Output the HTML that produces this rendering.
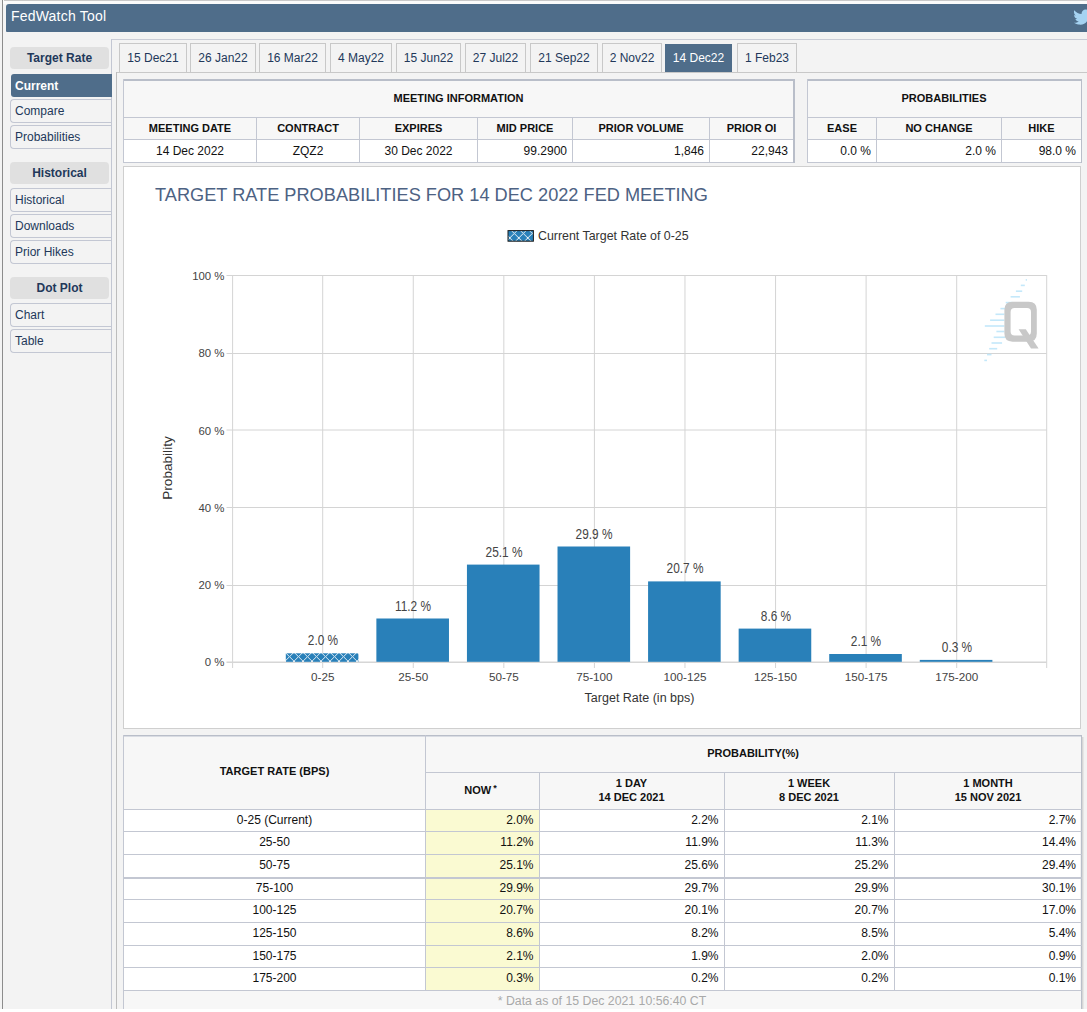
<!DOCTYPE html><html><head><meta charset="utf-8"><style>*{box-sizing:border-box;}html,body{margin:0;padding:0;width:1087px;height:1012px;overflow:hidden;background:#fff;}body{font-family:"Liberation Sans", sans-serif;position:relative;}</style></head><body>
<div style="position:absolute;left:0px;top:0px;width:1087px;height:1009px;background:#f3f3f3;"></div>
<div style="position:absolute;left:3px;top:0px;width:1084px;height:4px;background:#fbfbfb;"></div>
<div style="position:absolute;left:4px;top:0px;width:1083px;height:1px;background:#c9c9c9;"></div>
<div style="position:absolute;left:2px;top:0px;width:1px;height:1009px;background:#8c8c8c;"></div>
<div style="position:absolute;left:6px;top:4px;width:1090px;height:28px;background:#4f6d8a;border-top-left-radius:3px;border-bottom-left-radius:1px;"></div>
<div style="position:absolute;left:11px;top:9.15px;font-size:14px;line-height:14px;color:#fff;font-weight:normal;white-space:nowrap;letter-spacing:0.2px;">FedWatch Tool</div>
<svg style="position:absolute;left:1071.5px;top:7px" width="15.5" height="18" viewBox="0 0 15.5 18"><path fill="#a6d3f2" d="M2.2 3.2 C4.2 5.6 6.8 7.0 9.6 7.1 C9.3 4.6 11.2 2.6 13.6 2.6 C14.8 2.6 15.8 3.1 16.5 3.9 L16.5 9 C16.5 14.5 12.4 18.5 6.5 17.5 C4.6 17.3 3.2 16.6 2.0 15.8 C3.6 16.0 5.6 15.4 6.8 14.4 C5.2 14.3 3.9 13.3 3.4 11.9 C4.0 12.0 4.5 12.0 5.1 11.8 C3.4 11.4 2.1 9.9 2.1 8.1 C2.6 8.4 3.2 8.6 3.8 8.6 C2.1 7.5 1.6 5.1 2.2 3.2 Z"/></svg>
<div style="position:absolute;left:111px;top:39px;width:976px;height:1px;background:#c9ccd6;"></div>
<div style="position:absolute;left:111px;top:39px;width:1px;height:970px;background:#c3c7d3;"></div>
<div style="position:absolute;left:119px;top:43px;width:68px;height:29px;background:#f3f3f3;border:1px solid #c8c8c8;border-bottom:none;"></div>
<div style="position:absolute;left:-847.0px;width:2000px;text-align:center;top:51.84px;font-size:12px;line-height:12px;color:#22385a;font-weight:normal;white-space:nowrap;">15 Dec21</div>
<div style="position:absolute;left:190px;top:43px;width:66px;height:29px;background:#f3f3f3;border:1px solid #c8c8c8;border-bottom:none;"></div>
<div style="position:absolute;left:-777.0px;width:2000px;text-align:center;top:51.84px;font-size:12px;line-height:12px;color:#22385a;font-weight:normal;white-space:nowrap;">26 Jan22</div>
<div style="position:absolute;left:259px;top:43px;width:67px;height:29px;background:#f3f3f3;border:1px solid #c8c8c8;border-bottom:none;"></div>
<div style="position:absolute;left:-707.5px;width:2000px;text-align:center;top:51.84px;font-size:12px;line-height:12px;color:#22385a;font-weight:normal;white-space:nowrap;">16 Mar22</div>
<div style="position:absolute;left:330px;top:43px;width:62px;height:29px;background:#f3f3f3;border:1px solid #c8c8c8;border-bottom:none;"></div>
<div style="position:absolute;left:-639.0px;width:2000px;text-align:center;top:51.84px;font-size:12px;line-height:12px;color:#22385a;font-weight:normal;white-space:nowrap;">4 May22</div>
<div style="position:absolute;left:396px;top:43px;width:65px;height:29px;background:#f3f3f3;border:1px solid #c8c8c8;border-bottom:none;"></div>
<div style="position:absolute;left:-571.5px;width:2000px;text-align:center;top:51.84px;font-size:12px;line-height:12px;color:#22385a;font-weight:normal;white-space:nowrap;">15 Jun22</div>
<div style="position:absolute;left:465px;top:43px;width:61px;height:29px;background:#f3f3f3;border:1px solid #c8c8c8;border-bottom:none;"></div>
<div style="position:absolute;left:-504.5px;width:2000px;text-align:center;top:51.84px;font-size:12px;line-height:12px;color:#22385a;font-weight:normal;white-space:nowrap;">27 Jul22</div>
<div style="position:absolute;left:530px;top:43px;width:68px;height:29px;background:#f3f3f3;border:1px solid #c8c8c8;border-bottom:none;"></div>
<div style="position:absolute;left:-436.0px;width:2000px;text-align:center;top:51.84px;font-size:12px;line-height:12px;color:#22385a;font-weight:normal;white-space:nowrap;">21 Sep22</div>
<div style="position:absolute;left:602px;top:43px;width:60px;height:29px;background:#f3f3f3;border:1px solid #c8c8c8;border-bottom:none;"></div>
<div style="position:absolute;left:-368.0px;width:2000px;text-align:center;top:51.84px;font-size:12px;line-height:12px;color:#22385a;font-weight:normal;white-space:nowrap;">2 Nov22</div>
<div style="position:absolute;left:665px;top:44px;width:67px;height:28px;background:#4f6d8a;"></div>
<div style="position:absolute;left:-301.5px;width:2000px;text-align:center;top:51.84px;font-size:12px;line-height:12px;color:#fff;font-weight:normal;white-space:nowrap;">14 Dec22</div>
<div style="position:absolute;left:737px;top:43px;width:60px;height:29px;background:#f3f3f3;border:1px solid #c8c8c8;border-bottom:none;"></div>
<div style="position:absolute;left:-233.0px;width:2000px;text-align:center;top:51.84px;font-size:12px;line-height:12px;color:#22385a;font-weight:normal;white-space:nowrap;">1 Feb23</div>
<div style="position:absolute;left:116px;top:72px;width:971px;height:1px;background:#c8c8c8;"></div>
<div style="position:absolute;left:116px;top:72px;width:1px;height:937px;background:#bdbdbd;"></div>
<div style="position:absolute;left:10px;top:47px;width:99px;height:22px;background:#e0e0e0;border-radius:4px;"></div>
<div style="position:absolute;left:-940.5px;width:2000px;text-align:center;top:51.84px;font-size:12px;line-height:12px;color:#22385a;font-weight:bold;white-space:nowrap;">Target Rate</div>
<div style="position:absolute;left:11px;top:74px;width:101px;height:23px;background:#4f6d8a;border-radius:3px 0 0 3px;"></div>
<div style="position:absolute;left:15px;top:79.64px;font-size:12px;line-height:12px;color:#fff;font-weight:bold;white-space:nowrap;">Current</div>
<div style="position:absolute;left:10px;top:99px;width:101px;height:24px;background:#f3f3f3;border:1px solid #c3c7d3;border-right:none;border-radius:4px 0 0 4px;"></div>
<div style="position:absolute;left:15px;top:104.64px;font-size:12px;line-height:12px;color:#22385a;font-weight:normal;white-space:nowrap;">Compare</div>
<div style="position:absolute;left:10px;top:125px;width:101px;height:24px;background:#f3f3f3;border:1px solid #c3c7d3;border-right:none;border-radius:4px 0 0 4px;"></div>
<div style="position:absolute;left:15px;top:130.64px;font-size:12px;line-height:12px;color:#22385a;font-weight:normal;white-space:nowrap;">Probabilities</div>
<div style="position:absolute;left:10px;top:162px;width:99px;height:22px;background:#e0e0e0;border-radius:4px;"></div>
<div style="position:absolute;left:-940.5px;width:2000px;text-align:center;top:166.84px;font-size:12px;line-height:12px;color:#22385a;font-weight:bold;white-space:nowrap;">Historical</div>
<div style="position:absolute;left:10px;top:188px;width:101px;height:24px;background:#f3f3f3;border:1px solid #c3c7d3;border-right:none;border-radius:4px 0 0 4px;"></div>
<div style="position:absolute;left:15px;top:193.64px;font-size:12px;line-height:12px;color:#22385a;font-weight:normal;white-space:nowrap;">Historical</div>
<div style="position:absolute;left:10px;top:214px;width:101px;height:24px;background:#f3f3f3;border:1px solid #c3c7d3;border-right:none;border-radius:4px 0 0 4px;"></div>
<div style="position:absolute;left:15px;top:219.64px;font-size:12px;line-height:12px;color:#22385a;font-weight:normal;white-space:nowrap;">Downloads</div>
<div style="position:absolute;left:10px;top:240px;width:101px;height:24px;background:#f3f3f3;border:1px solid #c3c7d3;border-right:none;border-radius:4px 0 0 4px;"></div>
<div style="position:absolute;left:15px;top:245.64px;font-size:12px;line-height:12px;color:#22385a;font-weight:normal;white-space:nowrap;">Prior Hikes</div>
<div style="position:absolute;left:10px;top:277px;width:99px;height:22px;background:#e0e0e0;border-radius:4px;"></div>
<div style="position:absolute;left:-940.5px;width:2000px;text-align:center;top:281.84px;font-size:12px;line-height:12px;color:#22385a;font-weight:bold;white-space:nowrap;">Dot Plot</div>
<div style="position:absolute;left:10px;top:303px;width:101px;height:24px;background:#f3f3f3;border:1px solid #c3c7d3;border-right:none;border-radius:4px 0 0 4px;"></div>
<div style="position:absolute;left:15px;top:308.64px;font-size:12px;line-height:12px;color:#22385a;font-weight:normal;white-space:nowrap;">Chart</div>
<div style="position:absolute;left:10px;top:329px;width:101px;height:24px;background:#f3f3f3;border:1px solid #c3c7d3;border-right:none;border-radius:4px 0 0 4px;"></div>
<div style="position:absolute;left:15px;top:334.64px;font-size:12px;line-height:12px;color:#22385a;font-weight:normal;white-space:nowrap;">Table</div>
<div style="position:absolute;left:123px;top:79px;width:672px;height:38px;background:#f7f7f7;"></div>
<div style="position:absolute;left:123px;top:118px;width:672px;height:22px;background:#f7f7f7;"></div>
<div style="position:absolute;left:123px;top:140px;width:672px;height:22px;background:#fff;"></div>
<div style="position:absolute;left:123px;top:79px;width:672px;height:2px;background:#b9bec9;"></div>
<div style="position:absolute;left:123px;top:117px;width:672px;height:1px;background:#c3c7d2;"></div>
<div style="position:absolute;left:123px;top:139px;width:672px;height:1px;background:#c3c7d2;"></div>
<div style="position:absolute;left:123px;top:162px;width:672px;height:1px;background:#c3c7d2;"></div>
<div style="position:absolute;left:123px;top:79px;width:1px;height:84px;background:#c3c7d2;"></div>
<div style="position:absolute;left:793px;top:79px;width:2px;height:84px;background:#b9bec9;"></div>
<div style="position:absolute;left:256px;top:117px;width:1px;height:46px;background:#c3c7d2;"></div>
<div style="position:absolute;left:359px;top:117px;width:1px;height:46px;background:#c3c7d2;"></div>
<div style="position:absolute;left:477px;top:117px;width:1px;height:46px;background:#c3c7d2;"></div>
<div style="position:absolute;left:572px;top:117px;width:1px;height:46px;background:#c3c7d2;"></div>
<div style="position:absolute;left:709px;top:117px;width:1px;height:46px;background:#c3c7d2;"></div>
<div style="position:absolute;left:-541.5px;width:2000px;text-align:center;top:93.29px;font-size:11px;line-height:11px;color:#111;font-weight:bold;white-space:nowrap;">MEETING INFORMATION</div>
<div style="position:absolute;left:-810.0px;width:2000px;text-align:center;top:123.29px;font-size:11px;line-height:11px;color:#111;font-weight:bold;white-space:nowrap;">MEETING DATE</div>
<div style="position:absolute;left:-810.0px;width:2000px;text-align:center;top:144.64px;font-size:12px;line-height:12px;color:#111;font-weight:normal;white-space:nowrap;">14 Dec 2022</div>
<div style="position:absolute;left:-692.0px;width:2000px;text-align:center;top:123.29px;font-size:11px;line-height:11px;color:#111;font-weight:bold;white-space:nowrap;">CONTRACT</div>
<div style="position:absolute;left:-692.0px;width:2000px;text-align:center;top:144.64px;font-size:12px;line-height:12px;color:#111;font-weight:normal;white-space:nowrap;">ZQZ2</div>
<div style="position:absolute;left:-581.5px;width:2000px;text-align:center;top:123.29px;font-size:11px;line-height:11px;color:#111;font-weight:bold;white-space:nowrap;">EXPIRES</div>
<div style="position:absolute;left:-581.5px;width:2000px;text-align:center;top:144.64px;font-size:12px;line-height:12px;color:#111;font-weight:normal;white-space:nowrap;">30 Dec 2022</div>
<div style="position:absolute;left:-475.0px;width:2000px;text-align:center;top:123.29px;font-size:11px;line-height:11px;color:#111;font-weight:bold;white-space:nowrap;">MID PRICE</div>
<div style="position:absolute;left:-1433px;width:2000px;text-align:right;top:144.64px;font-size:12px;line-height:12px;color:#111;font-weight:normal;white-space:nowrap;">99.2900</div>
<div style="position:absolute;left:-359.0px;width:2000px;text-align:center;top:123.29px;font-size:11px;line-height:11px;color:#111;font-weight:bold;white-space:nowrap;">PRIOR VOLUME</div>
<div style="position:absolute;left:-1296px;width:2000px;text-align:right;top:144.64px;font-size:12px;line-height:12px;color:#111;font-weight:normal;white-space:nowrap;">1,846</div>
<div style="position:absolute;left:-248.5px;width:2000px;text-align:center;top:123.29px;font-size:11px;line-height:11px;color:#111;font-weight:bold;white-space:nowrap;">PRIOR OI</div>
<div style="position:absolute;left:-1212px;width:2000px;text-align:right;top:144.64px;font-size:12px;line-height:12px;color:#111;font-weight:normal;white-space:nowrap;">22,943</div>
<div style="position:absolute;left:807px;top:79px;width:275px;height:38px;background:#f7f7f7;"></div>
<div style="position:absolute;left:807px;top:118px;width:275px;height:22px;background:#f7f7f7;"></div>
<div style="position:absolute;left:807px;top:140px;width:275px;height:22px;background:#fff;"></div>
<div style="position:absolute;left:807px;top:79px;width:275px;height:2px;background:#b9bec9;"></div>
<div style="position:absolute;left:807px;top:117px;width:275px;height:1px;background:#c3c7d2;"></div>
<div style="position:absolute;left:807px;top:139px;width:275px;height:1px;background:#c3c7d2;"></div>
<div style="position:absolute;left:807px;top:162px;width:275px;height:1px;background:#c3c7d2;"></div>
<div style="position:absolute;left:807px;top:79px;width:1px;height:84px;background:#c3c7d2;"></div>
<div style="position:absolute;left:1081px;top:79px;width:1px;height:84px;background:#b9bec9;"></div>
<div style="position:absolute;left:876px;top:117px;width:1px;height:46px;background:#c3c7d2;"></div>
<div style="position:absolute;left:1001px;top:117px;width:1px;height:46px;background:#c3c7d2;"></div>
<div style="position:absolute;left:-56.0px;width:2000px;text-align:center;top:93.29px;font-size:11px;line-height:11px;color:#111;font-weight:bold;white-space:nowrap;">PROBABILITIES</div>
<div style="position:absolute;left:-158.0px;width:2000px;text-align:center;top:123.29px;font-size:11px;line-height:11px;color:#111;font-weight:bold;white-space:nowrap;">EASE</div>
<div style="position:absolute;left:-1129px;width:2000px;text-align:right;top:144.64px;font-size:12px;line-height:12px;color:#111;font-weight:normal;white-space:nowrap;">0.0 %</div>
<div style="position:absolute;left:-61.0px;width:2000px;text-align:center;top:123.29px;font-size:11px;line-height:11px;color:#111;font-weight:bold;white-space:nowrap;">NO CHANGE</div>
<div style="position:absolute;left:-1004px;width:2000px;text-align:right;top:144.64px;font-size:12px;line-height:12px;color:#111;font-weight:normal;white-space:nowrap;">2.0 %</div>
<div style="position:absolute;left:41.5px;width:2000px;text-align:center;top:123.29px;font-size:11px;line-height:11px;color:#111;font-weight:bold;white-space:nowrap;">HIKE</div>
<div style="position:absolute;left:-924px;width:2000px;text-align:right;top:144.64px;font-size:12px;line-height:12px;color:#111;font-weight:normal;white-space:nowrap;">98.0 %</div>
<div style="position:absolute;left:123px;top:166px;width:958px;height:563px;background:#fff;border:1px solid #cfcfcf;"></div>
<svg style="position:absolute;left:124px;top:167px" width="956" height="561" viewBox="124 167 956 561"><defs><pattern id="hatch" patternUnits="userSpaceOnUse" width="9" height="9" x="285" y="652.2"><rect width="9" height="9" fill="#2980b9"/><path d="M0 0 L9 9 M9 0 L0 9" stroke="#fff" stroke-width="1.0" opacity="0.85"/></pattern><pattern id="hatch2" patternUnits="userSpaceOnUse" width="9" height="9" x="509.8" y="228.9"><rect width="9" height="9" fill="#2980b9"/><path d="M0 0 L9 9 M9 0 L0 9" stroke="#fff" stroke-width="1.0" opacity="0.9"/></pattern></defs><line x1="232.6" y1="275.5" x2="1046.7" y2="275.5" stroke="#d4d4d4" stroke-width="1"/><line x1="226.5" y1="275.5" x2="232.6" y2="275.5" stroke="#d4d4d4" stroke-width="1"/><line x1="232.6" y1="353.5" x2="1046.7" y2="353.5" stroke="#d4d4d4" stroke-width="1"/><line x1="226.5" y1="353.5" x2="232.6" y2="353.5" stroke="#d4d4d4" stroke-width="1"/><line x1="232.6" y1="430.0" x2="1046.7" y2="430.0" stroke="#d4d4d4" stroke-width="1"/><line x1="226.5" y1="430.0" x2="232.6" y2="430.0" stroke="#d4d4d4" stroke-width="1"/><line x1="232.6" y1="507.5" x2="1046.7" y2="507.5" stroke="#d4d4d4" stroke-width="1"/><line x1="226.5" y1="507.5" x2="232.6" y2="507.5" stroke="#d4d4d4" stroke-width="1"/><line x1="232.6" y1="585.5" x2="1046.7" y2="585.5" stroke="#d4d4d4" stroke-width="1"/><line x1="226.5" y1="585.5" x2="232.6" y2="585.5" stroke="#d4d4d4" stroke-width="1"/><line x1="322.70" y1="275" x2="322.70" y2="668" stroke="#d4d4d4" stroke-width="1"/><line x1="413.27" y1="275" x2="413.27" y2="668" stroke="#d4d4d4" stroke-width="1"/><line x1="503.84" y1="275" x2="503.84" y2="668" stroke="#d4d4d4" stroke-width="1"/><line x1="594.41" y1="275" x2="594.41" y2="668" stroke="#d4d4d4" stroke-width="1"/><line x1="684.98" y1="275" x2="684.98" y2="668" stroke="#d4d4d4" stroke-width="1"/><line x1="775.55" y1="275" x2="775.55" y2="668" stroke="#d4d4d4" stroke-width="1"/><line x1="866.12" y1="275" x2="866.12" y2="668" stroke="#d4d4d4" stroke-width="1"/><line x1="956.69" y1="275" x2="956.69" y2="668" stroke="#d4d4d4" stroke-width="1"/><line x1="232.6" y1="275" x2="232.6" y2="668" stroke="#d4d4d4" stroke-width="1"/><line x1="1046.7" y1="275" x2="1046.7" y2="668" stroke="#d4d4d4" stroke-width="1"/><line x1="226.5" y1="662.2" x2="1046.7" y2="662.2" stroke="#d6d6d6" stroke-width="1.6"/><rect x="285.80" y="653.30" width="72.6" height="8.50" fill="url(#hatch)"/><rect x="376.37" y="618.50" width="72.6" height="43.30" fill="#2980b9"/><rect x="466.94" y="564.60" width="72.6" height="97.20" fill="#2980b9"/><rect x="557.51" y="546.50" width="72.6" height="115.30" fill="#2980b9"/><rect x="648.08" y="581.40" width="72.6" height="80.40" fill="#2980b9"/><rect x="738.65" y="628.60" width="72.6" height="33.20" fill="#2980b9"/><rect x="829.22" y="654.00" width="72.6" height="7.80" fill="#2980b9"/><rect x="919.79" y="659.90" width="72.6" height="1.90" fill="#2980b9"/></svg>
<div style="position:absolute;left:155px;top:185.59px;font-size:18.2px;line-height:18.2px;color:#4d6283;font-weight:normal;white-space:nowrap;">TARGET RATE PROBABILITIES FOR 14 DEC 2022 FED MEETING</div>
<svg style="position:absolute;left:507px;top:230px" width="27" height="12" viewBox="507 230 27 12"><rect x="508" y="230.6" width="25.4" height="10.6" fill="url(#hatch2)" stroke="#1a1a1a" stroke-width="1"/></svg>
<div style="position:absolute;left:538px;top:229.50px;font-size:12.4px;line-height:12.4px;color:#333;font-weight:normal;white-space:nowrap;">Current Target Rate of 0-25</div>
<div style="position:absolute;left:-1775.5px;width:2000px;text-align:right;top:271.15px;font-size:11.4px;line-height:11.4px;color:#444;font-weight:normal;white-space:nowrap;">100 %</div>
<div style="position:absolute;left:-1775.5px;width:2000px;text-align:right;top:348.41px;font-size:11.4px;line-height:11.4px;color:#444;font-weight:normal;white-space:nowrap;">80 %</div>
<div style="position:absolute;left:-1775.5px;width:2000px;text-align:right;top:425.67px;font-size:11.4px;line-height:11.4px;color:#444;font-weight:normal;white-space:nowrap;">60 %</div>
<div style="position:absolute;left:-1775.5px;width:2000px;text-align:right;top:502.93px;font-size:11.4px;line-height:11.4px;color:#444;font-weight:normal;white-space:nowrap;">40 %</div>
<div style="position:absolute;left:-1775.5px;width:2000px;text-align:right;top:580.19px;font-size:11.4px;line-height:11.4px;color:#444;font-weight:normal;white-space:nowrap;">20 %</div>
<div style="position:absolute;left:-1775.5px;width:2000px;text-align:right;top:657.45px;font-size:11.4px;line-height:11.4px;color:#444;font-weight:normal;white-space:nowrap;">0 %</div>
<div style="position:absolute;left:-677.3px;width:2000px;text-align:center;top:670.70px;font-size:11.7px;line-height:11.7px;color:#444;font-weight:normal;white-space:nowrap;">0-25</div>
<div style="position:absolute;left:-586.73px;width:2000px;text-align:center;top:670.70px;font-size:11.7px;line-height:11.7px;color:#444;font-weight:normal;white-space:nowrap;">25-50</div>
<div style="position:absolute;left:-496.16px;width:2000px;text-align:center;top:670.70px;font-size:11.7px;line-height:11.7px;color:#444;font-weight:normal;white-space:nowrap;">50-75</div>
<div style="position:absolute;left:-405.59000000000003px;width:2000px;text-align:center;top:670.70px;font-size:11.7px;line-height:11.7px;color:#444;font-weight:normal;white-space:nowrap;">75-100</div>
<div style="position:absolute;left:-315.02px;width:2000px;text-align:center;top:670.70px;font-size:11.7px;line-height:11.7px;color:#444;font-weight:normal;white-space:nowrap;">100-125</div>
<div style="position:absolute;left:-224.45000000000005px;width:2000px;text-align:center;top:670.70px;font-size:11.7px;line-height:11.7px;color:#444;font-weight:normal;white-space:nowrap;">125-150</div>
<div style="position:absolute;left:-133.8800000000001px;width:2000px;text-align:center;top:670.70px;font-size:11.7px;line-height:11.7px;color:#444;font-weight:normal;white-space:nowrap;">150-175</div>
<div style="position:absolute;left:-43.309999999999945px;width:2000px;text-align:center;top:670.70px;font-size:11.7px;line-height:11.7px;color:#444;font-weight:normal;white-space:nowrap;">175-200</div>
<div style="position:absolute;left:-677.3px;width:2000px;text-align:center;top:632.30px;font-size:15px;line-height:15px;color:#444;font-weight:normal;white-space:nowrap;transform:scaleX(0.79);transform-origin:50% 50%;">2.0 %</div>
<div style="position:absolute;left:-586.73px;width:2000px;text-align:center;top:597.50px;font-size:15px;line-height:15px;color:#444;font-weight:normal;white-space:nowrap;transform:scaleX(0.79);transform-origin:50% 50%;">11.2 %</div>
<div style="position:absolute;left:-496.16px;width:2000px;text-align:center;top:543.60px;font-size:15px;line-height:15px;color:#444;font-weight:normal;white-space:nowrap;transform:scaleX(0.79);transform-origin:50% 50%;">25.1 %</div>
<div style="position:absolute;left:-405.59000000000003px;width:2000px;text-align:center;top:525.50px;font-size:15px;line-height:15px;color:#444;font-weight:normal;white-space:nowrap;transform:scaleX(0.79);transform-origin:50% 50%;">29.9 %</div>
<div style="position:absolute;left:-315.02px;width:2000px;text-align:center;top:560.40px;font-size:15px;line-height:15px;color:#444;font-weight:normal;white-space:nowrap;transform:scaleX(0.79);transform-origin:50% 50%;">20.7 %</div>
<div style="position:absolute;left:-224.45000000000005px;width:2000px;text-align:center;top:607.60px;font-size:15px;line-height:15px;color:#444;font-weight:normal;white-space:nowrap;transform:scaleX(0.79);transform-origin:50% 50%;">8.6 %</div>
<div style="position:absolute;left:-133.8800000000001px;width:2000px;text-align:center;top:633.00px;font-size:15px;line-height:15px;color:#444;font-weight:normal;white-space:nowrap;transform:scaleX(0.79);transform-origin:50% 50%;">2.1 %</div>
<div style="position:absolute;left:-43.309999999999945px;width:2000px;text-align:center;top:638.90px;font-size:15px;line-height:15px;color:#444;font-weight:normal;white-space:nowrap;transform:scaleX(0.79);transform-origin:50% 50%;">0.3 %</div>
<div style="position:absolute;left:-360.5px;width:2000px;text-align:center;top:692.12px;font-size:12.5px;line-height:12.5px;color:#333;font-weight:normal;white-space:nowrap;">Target Rate (in bps)</div>
<div style="position:absolute;left:117.5px;top:460px;width:100px;height:16px;transform:rotate(-90deg);text-align:center;font-size:13.6px;line-height:16px;color:#333;white-space:nowrap;">Probability</div>
<div style="position:absolute;left:123px;top:735px;width:959px;height:74px;background:#f7f7f7;"></div>
<div style="position:absolute;left:123px;top:991px;width:959px;height:18px;background:#f7f7f7;"></div>
<div style="position:absolute;left:123px;top:735px;width:959px;height:1px;background:#b9bec9;"></div>
<div style="position:absolute;left:123px;top:736px;width:959px;height:1px;background:#d9dce3;"></div>
<div style="position:absolute;left:123px;top:735px;width:1px;height:274px;background:#c3c7d2;"></div>
<div style="position:absolute;left:1081px;top:735px;width:1px;height:274px;background:#b9bec9;"></div>
<div style="position:absolute;left:1082px;top:737px;width:1px;height:272px;background:#d6d6d6;"></div>
<div style="position:absolute;left:1083px;top:737px;width:1px;height:272px;background:#e6e6e6;"></div>
<div style="position:absolute;left:425px;top:772px;width:656px;height:1px;background:#c3c7d2;"></div>
<div style="position:absolute;left:425px;top:735px;width:1px;height:256px;background:#c3c7d2;"></div>
<div style="position:absolute;left:539px;top:772px;width:1px;height:219px;background:#c3c7d2;"></div>
<div style="position:absolute;left:724px;top:772px;width:1px;height:219px;background:#c3c7d2;"></div>
<div style="position:absolute;left:894px;top:772px;width:1px;height:219px;background:#c3c7d2;"></div>
<div style="position:absolute;left:124px;top:810px;width:956px;height:21px;background:#fff;"></div>
<div style="position:absolute;left:426px;top:810px;width:113px;height:21px;background:#fafad2;"></div>
<div style="position:absolute;left:-725.5px;width:2000px;text-align:center;top:814.14px;font-size:12px;line-height:12px;color:#111;font-weight:normal;white-space:nowrap;">0-25 (Current)</div>
<div style="position:absolute;left:-1466.5px;width:2000px;text-align:right;top:814.14px;font-size:12px;line-height:12px;color:#111;font-weight:normal;white-space:nowrap;">2.0%</div>
<div style="position:absolute;left:-1281.5px;width:2000px;text-align:right;top:814.14px;font-size:12px;line-height:12px;color:#111;font-weight:normal;white-space:nowrap;">2.2%</div>
<div style="position:absolute;left:-1111.5px;width:2000px;text-align:right;top:814.14px;font-size:12px;line-height:12px;color:#111;font-weight:normal;white-space:nowrap;">2.1%</div>
<div style="position:absolute;left:-924px;width:2000px;text-align:right;top:814.14px;font-size:12px;line-height:12px;color:#111;font-weight:normal;white-space:nowrap;">2.7%</div>
<div style="position:absolute;left:124px;top:832px;width:956px;height:22px;background:#fff;"></div>
<div style="position:absolute;left:426px;top:832px;width:113px;height:22px;background:#fafad2;"></div>
<div style="position:absolute;left:-725.5px;width:2000px;text-align:center;top:836.14px;font-size:12px;line-height:12px;color:#111;font-weight:normal;white-space:nowrap;">25-50</div>
<div style="position:absolute;left:-1466.5px;width:2000px;text-align:right;top:836.14px;font-size:12px;line-height:12px;color:#111;font-weight:normal;white-space:nowrap;">11.2%</div>
<div style="position:absolute;left:-1281.5px;width:2000px;text-align:right;top:836.14px;font-size:12px;line-height:12px;color:#111;font-weight:normal;white-space:nowrap;">11.9%</div>
<div style="position:absolute;left:-1111.5px;width:2000px;text-align:right;top:836.14px;font-size:12px;line-height:12px;color:#111;font-weight:normal;white-space:nowrap;">11.3%</div>
<div style="position:absolute;left:-924px;width:2000px;text-align:right;top:836.14px;font-size:12px;line-height:12px;color:#111;font-weight:normal;white-space:nowrap;">14.4%</div>
<div style="position:absolute;left:124px;top:855px;width:956px;height:22px;background:#fff;"></div>
<div style="position:absolute;left:426px;top:855px;width:113px;height:22px;background:#fafad2;"></div>
<div style="position:absolute;left:-725.5px;width:2000px;text-align:center;top:859.14px;font-size:12px;line-height:12px;color:#111;font-weight:normal;white-space:nowrap;">50-75</div>
<div style="position:absolute;left:-1466.5px;width:2000px;text-align:right;top:859.14px;font-size:12px;line-height:12px;color:#111;font-weight:normal;white-space:nowrap;">25.1%</div>
<div style="position:absolute;left:-1281.5px;width:2000px;text-align:right;top:859.14px;font-size:12px;line-height:12px;color:#111;font-weight:normal;white-space:nowrap;">25.6%</div>
<div style="position:absolute;left:-1111.5px;width:2000px;text-align:right;top:859.14px;font-size:12px;line-height:12px;color:#111;font-weight:normal;white-space:nowrap;">25.2%</div>
<div style="position:absolute;left:-924px;width:2000px;text-align:right;top:859.14px;font-size:12px;line-height:12px;color:#111;font-weight:normal;white-space:nowrap;">29.4%</div>
<div style="position:absolute;left:124px;top:878px;width:956px;height:21px;background:#fff;"></div>
<div style="position:absolute;left:426px;top:878px;width:113px;height:21px;background:#fafad2;"></div>
<div style="position:absolute;left:-725.5px;width:2000px;text-align:center;top:882.14px;font-size:12px;line-height:12px;color:#111;font-weight:normal;white-space:nowrap;">75-100</div>
<div style="position:absolute;left:-1466.5px;width:2000px;text-align:right;top:882.14px;font-size:12px;line-height:12px;color:#111;font-weight:normal;white-space:nowrap;">29.9%</div>
<div style="position:absolute;left:-1281.5px;width:2000px;text-align:right;top:882.14px;font-size:12px;line-height:12px;color:#111;font-weight:normal;white-space:nowrap;">29.7%</div>
<div style="position:absolute;left:-1111.5px;width:2000px;text-align:right;top:882.14px;font-size:12px;line-height:12px;color:#111;font-weight:normal;white-space:nowrap;">29.9%</div>
<div style="position:absolute;left:-924px;width:2000px;text-align:right;top:882.14px;font-size:12px;line-height:12px;color:#111;font-weight:normal;white-space:nowrap;">30.1%</div>
<div style="position:absolute;left:124px;top:900px;width:956px;height:22px;background:#fff;"></div>
<div style="position:absolute;left:426px;top:900px;width:113px;height:22px;background:#fafad2;"></div>
<div style="position:absolute;left:-725.5px;width:2000px;text-align:center;top:904.14px;font-size:12px;line-height:12px;color:#111;font-weight:normal;white-space:nowrap;">100-125</div>
<div style="position:absolute;left:-1466.5px;width:2000px;text-align:right;top:904.14px;font-size:12px;line-height:12px;color:#111;font-weight:normal;white-space:nowrap;">20.7%</div>
<div style="position:absolute;left:-1281.5px;width:2000px;text-align:right;top:904.14px;font-size:12px;line-height:12px;color:#111;font-weight:normal;white-space:nowrap;">20.1%</div>
<div style="position:absolute;left:-1111.5px;width:2000px;text-align:right;top:904.14px;font-size:12px;line-height:12px;color:#111;font-weight:normal;white-space:nowrap;">20.7%</div>
<div style="position:absolute;left:-924px;width:2000px;text-align:right;top:904.14px;font-size:12px;line-height:12px;color:#111;font-weight:normal;white-space:nowrap;">17.0%</div>
<div style="position:absolute;left:124px;top:923px;width:956px;height:22px;background:#fff;"></div>
<div style="position:absolute;left:426px;top:923px;width:113px;height:22px;background:#fafad2;"></div>
<div style="position:absolute;left:-725.5px;width:2000px;text-align:center;top:927.14px;font-size:12px;line-height:12px;color:#111;font-weight:normal;white-space:nowrap;">125-150</div>
<div style="position:absolute;left:-1466.5px;width:2000px;text-align:right;top:927.14px;font-size:12px;line-height:12px;color:#111;font-weight:normal;white-space:nowrap;">8.6%</div>
<div style="position:absolute;left:-1281.5px;width:2000px;text-align:right;top:927.14px;font-size:12px;line-height:12px;color:#111;font-weight:normal;white-space:nowrap;">8.2%</div>
<div style="position:absolute;left:-1111.5px;width:2000px;text-align:right;top:927.14px;font-size:12px;line-height:12px;color:#111;font-weight:normal;white-space:nowrap;">8.5%</div>
<div style="position:absolute;left:-924px;width:2000px;text-align:right;top:927.14px;font-size:12px;line-height:12px;color:#111;font-weight:normal;white-space:nowrap;">5.4%</div>
<div style="position:absolute;left:124px;top:946px;width:956px;height:21px;background:#fff;"></div>
<div style="position:absolute;left:426px;top:946px;width:113px;height:21px;background:#fafad2;"></div>
<div style="position:absolute;left:-725.5px;width:2000px;text-align:center;top:950.14px;font-size:12px;line-height:12px;color:#111;font-weight:normal;white-space:nowrap;">150-175</div>
<div style="position:absolute;left:-1466.5px;width:2000px;text-align:right;top:950.14px;font-size:12px;line-height:12px;color:#111;font-weight:normal;white-space:nowrap;">2.1%</div>
<div style="position:absolute;left:-1281.5px;width:2000px;text-align:right;top:950.14px;font-size:12px;line-height:12px;color:#111;font-weight:normal;white-space:nowrap;">1.9%</div>
<div style="position:absolute;left:-1111.5px;width:2000px;text-align:right;top:950.14px;font-size:12px;line-height:12px;color:#111;font-weight:normal;white-space:nowrap;">2.0%</div>
<div style="position:absolute;left:-924px;width:2000px;text-align:right;top:950.14px;font-size:12px;line-height:12px;color:#111;font-weight:normal;white-space:nowrap;">0.9%</div>
<div style="position:absolute;left:124px;top:968px;width:956px;height:22px;background:#fff;"></div>
<div style="position:absolute;left:426px;top:968px;width:113px;height:22px;background:#fafad2;"></div>
<div style="position:absolute;left:-725.5px;width:2000px;text-align:center;top:972.14px;font-size:12px;line-height:12px;color:#111;font-weight:normal;white-space:nowrap;">175-200</div>
<div style="position:absolute;left:-1466.5px;width:2000px;text-align:right;top:972.14px;font-size:12px;line-height:12px;color:#111;font-weight:normal;white-space:nowrap;">0.3%</div>
<div style="position:absolute;left:-1281.5px;width:2000px;text-align:right;top:972.14px;font-size:12px;line-height:12px;color:#111;font-weight:normal;white-space:nowrap;">0.2%</div>
<div style="position:absolute;left:-1111.5px;width:2000px;text-align:right;top:972.14px;font-size:12px;line-height:12px;color:#111;font-weight:normal;white-space:nowrap;">0.2%</div>
<div style="position:absolute;left:-924px;width:2000px;text-align:right;top:972.14px;font-size:12px;line-height:12px;color:#111;font-weight:normal;white-space:nowrap;">0.1%</div>
<div style="position:absolute;left:123px;top:809px;width:959px;height:1px;background:#c3c7d2;"></div>
<div style="position:absolute;left:123px;top:831px;width:959px;height:1px;background:#c3c7d2;"></div>
<div style="position:absolute;left:123px;top:854px;width:959px;height:1px;background:#c3c7d2;"></div>
<div style="position:absolute;left:123px;top:877px;width:959px;height:2px;background:#c3c7d2;"></div>
<div style="position:absolute;left:123px;top:899px;width:959px;height:1px;background:#c3c7d2;"></div>
<div style="position:absolute;left:123px;top:922px;width:959px;height:1px;background:#c3c7d2;"></div>
<div style="position:absolute;left:123px;top:945px;width:959px;height:1px;background:#c3c7d2;"></div>
<div style="position:absolute;left:123px;top:967px;width:959px;height:1px;background:#c3c7d2;"></div>
<div style="position:absolute;left:123px;top:990px;width:959px;height:1px;background:#c3c7d2;"></div>
<div style="position:absolute;left:425px;top:735px;width:1px;height:256px;background:#c3c7d2;"></div>
<div style="position:absolute;left:539px;top:772px;width:1px;height:219px;background:#c3c7d2;"></div>
<div style="position:absolute;left:724px;top:772px;width:1px;height:219px;background:#c3c7d2;"></div>
<div style="position:absolute;left:894px;top:772px;width:1px;height:219px;background:#c3c7d2;"></div>
<div style="position:absolute;left:-725.5px;width:2000px;text-align:center;top:765.69px;font-size:11px;line-height:11px;color:#111;font-weight:bold;white-space:nowrap;">TARGET RATE (BPS)</div>
<div style="position:absolute;left:-247px;width:2000px;text-align:center;top:748.49px;font-size:11px;line-height:11px;color:#111;font-weight:bold;white-space:nowrap;">PROBABILITY(%)</div>
<div style="position:absolute;left:-519.5px;width:2000px;text-align:center;top:785.19px;font-size:11px;line-height:11px;color:#111;font-weight:bold;white-space:nowrap;">NOW<sup style="font-size:9px;position:relative;top:-1px;margin-left:2px;vertical-align:top;line-height:9px">*</sup></div>
<div style="position:absolute;left:-368.5px;width:2000px;text-align:center;top:777.69px;font-size:11px;line-height:11px;color:#111;font-weight:bold;white-space:nowrap;">1 DAY</div>
<div style="position:absolute;left:-368.5px;width:2000px;text-align:center;top:792.19px;font-size:11px;line-height:11px;color:#111;font-weight:bold;white-space:nowrap;">14 DEC 2021</div>
<div style="position:absolute;left:-191px;width:2000px;text-align:center;top:777.69px;font-size:11px;line-height:11px;color:#111;font-weight:bold;white-space:nowrap;">1 WEEK</div>
<div style="position:absolute;left:-191px;width:2000px;text-align:center;top:792.19px;font-size:11px;line-height:11px;color:#111;font-weight:bold;white-space:nowrap;">8 DEC 2021</div>
<div style="position:absolute;left:-12px;width:2000px;text-align:center;top:777.69px;font-size:11px;line-height:11px;color:#111;font-weight:bold;white-space:nowrap;">1 MONTH</div>
<div style="position:absolute;left:-12px;width:2000px;text-align:center;top:792.19px;font-size:11px;line-height:11px;color:#111;font-weight:bold;white-space:nowrap;">15 NOV 2021</div>
<div style="position:absolute;left:-398px;width:2000px;text-align:center;top:994.59px;font-size:12.3px;line-height:12.3px;color:#a9a9a9;font-weight:normal;white-space:nowrap;">* Data as of 15 Dec 2021 10:56:40 CT</div>
<svg style="position:absolute;left:980px;top:276px" width="62" height="90" viewBox="980 276 62 90"><rect x="1025.7" y="279.09999999999997" width="1.2999999999999545" height="1.6" fill="#c4e8fa"/><rect x="1020.8" y="284.59999999999997" width="4.0" height="1.6" fill="#c4e8fa"/><rect x="1015.9" y="290.4" width="6.300000000000068" height="1.6" fill="#c4e8fa"/><rect x="1010.6" y="296.0" width="9.299999999999955" height="1.6" fill="#c4e8fa"/><rect x="1005.7" y="301.8" width="6.699999999999932" height="1.6" fill="#c4e8fa"/><rect x="1000.4" y="307.8" width="4.800000000000068" height="1.6" fill="#c4e8fa"/><rect x="995.5" y="313.5" width="8.899999999999977" height="1.6" fill="#c4e8fa"/><rect x="990.1" y="319.4" width="14.299999999999955" height="1.6" fill="#c4e8fa"/><rect x="984.8" y="325.2" width="19.600000000000023" height="1.6" fill="#c4e8fa"/><rect x="996.4" y="330.7" width="8.0" height="1.6" fill="#c4e8fa"/><rect x="993.7" y="336.5" width="11.5" height="1.6" fill="#c4e8fa"/><rect x="991.5" y="342.2" width="10.600000000000023" height="1.6" fill="#c4e8fa"/><rect x="989.2" y="347.9" width="8.0" height="1.6" fill="#c4e8fa"/><rect x="987" y="353.8" width="4.5" height="1.6" fill="#c4e8fa"/><rect x="984.3" y="359.59999999999997" width="2.7000000000000455" height="1.6" fill="#c4e8fa"/><path fill="#c8c8c8" fill-rule="evenodd" d="M1012.5 301.7 H1028.7 Q1036.8 301.7 1036.8 309.8 V333.6 Q1036.8 341.7 1028.7 341.7 H1012.5 Q1004.4 341.7 1004.4 333.6 V309.8 Q1004.4 301.7 1012.5 301.7 Z M1014.6 307.9 Q1010.6 307.9 1010.6 311.9 V331.5 Q1010.6 335.5 1014.6 335.5 H1027 Q1031 335.5 1031 331.5 V311.9 Q1031 307.9 1027 307.9 Z"/><path fill="#c8c8c8" d="M1018.6 329.3 L1025.8 329.3 L1038.6 348.4 L1031 348.4 Z"/></svg>
</body></html>
